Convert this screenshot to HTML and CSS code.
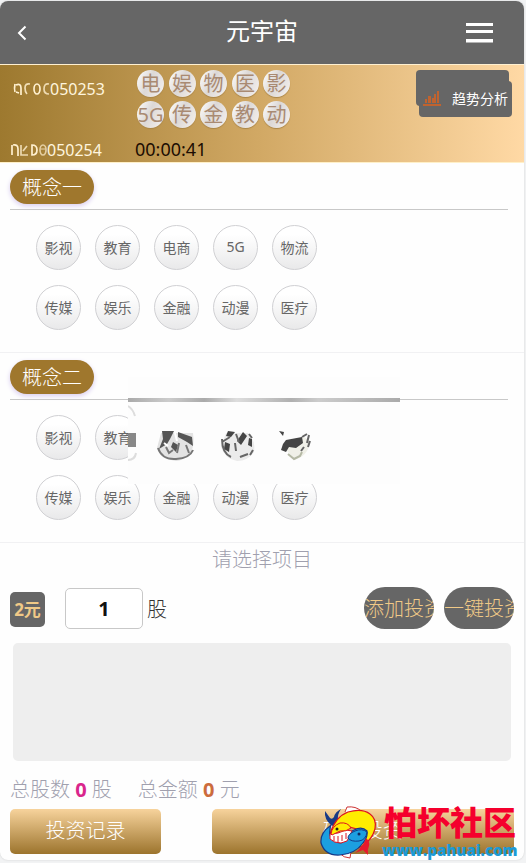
FILE: index.html
```
<!DOCTYPE html>
<html lang="zh-CN">
<head>
    <meta charset="utf-8">
    <title>元宇宙</title>
    <meta name="viewport" content="width=device-width, initial-scale=1">
    <link rel="stylesheet" href="styles.css">
</head>
<body>
<div class="page">
	<header class="topbar">
		<button type="button" class="back" aria-label="返回">
			<svg width="10" height="16" viewBox="0 0 10 16"><path d="M8.500 1.500L2 8l6.500 6.500" fill="none" stroke="#fff" stroke-width="2"/></svg>
		</button>
		<h1>元宇宙</h1>
		<button type="button" class="menu" aria-label="菜单">
			<svg width="27" height="20" viewBox="0 0 27 20"><path d="M0 0h27v3H0zM0 7h27v3H0zM0 16h27v3.500H0z" fill="#fff"/></svg>
		</button>
	</header>

	<div class="issue">
		<div class="issue-no">
			<div class="last">
				<svg width="37" height="16" viewBox="0 0 37 16" fill="none" stroke="#fff0cf" stroke-width="1.700"><path d="M2 3q-1 5 0 8M3 4q5-2 5 3v7M3 11l3 1"/><path d="M17 3q-5-1-5 4 0 4 2 6" opacity=".85"/><ellipse cx="24" cy="8" rx="3" ry="5"/><path d="M36 3q-5-1-5 5 0 5 5 5" opacity=".8"/></svg>050253
			</div>
			<div class="next">
				<svg width="37" height="16" viewBox="0 0 37 16" fill="none" stroke="#fff0cf" stroke-width="1.700"><path d="M2 3v10M3 3q5-1 5 4v7"/><path d="M11 3v10h7M17 4l-4 5" opacity=".8"/><path d="M22 3v10q5 0 5-5 0-5-5-5z"/><ellipse cx="33" cy="8" rx="3" ry="5" opacity=".7"/><path d="M31 7h4" opacity=".5"/></svg>050254
			</div>
		</div>
		<div class="draw">
			<ul class="balls">
				<li>电</li><li>娱</li><li>物</li><li>医</li><li>影</li>
				<li>5G</li><li>传</li><li>金</li><li>教</li><li>动</li>
			</ul>
			<div class="timer">00:00:41</div>
		</div>
		<button type="button" class="trend">
			<svg width="18" height="15" viewBox="0 0 18 15"><path d="M0 13h18v2H0zM2 8h2v4H2zM5 5h3v7H5zM9 7h2v5H9zM11 3h2v9h-2zM14 0h2v12h-2z" fill="#c0632f"/></svg>
			<span>趋势分析</span>
		</button>
	</div>

	<section class="concept">
		<div class="concept-head"><h2>概念一</h2></div>
		<div class="options">
			<button type="button">影视</button>
			<button type="button">教育</button>
			<button type="button">电商</button>
			<button type="button">5G</button>
			<button type="button">物流</button>
			<button type="button">传媒</button>
			<button type="button">娱乐</button>
			<button type="button">金融</button>
			<button type="button">动漫</button>
			<button type="button">医疗</button>
		</div>
	</section>

	<section class="concept">
		<div class="concept-head"><h2>概念二</h2></div>
		<div class="options">
			<button type="button">影视</button>
			<button type="button">教育</button>
			<button type="button">电商</button>
			<button type="button">5G</button>
			<button type="button">物流</button>
			<button type="button">传媒</button>
			<button type="button">娱乐</button>
			<button type="button">金融</button>
			<button type="button">动漫</button>
			<button type="button">医疗</button>
		</div>
		<!-- smeared patch lying over the second group -->
		<svg class="smudge" width="272" height="107" viewBox="0 0 272 107">
			<defs>
				<filter id="soft"><feGaussianBlur stdDeviation="0.700"/></filter>
				<linearGradient id="line">
					<stop offset="0" stop-color="#aaa"/>
					<stop offset=".15" stop-color="#ccc"/>
					<stop offset=".28" stop-color="#aaa"/>
					<stop offset=".4" stop-color="#ddd"/>
					<stop offset=".6" stop-color="#b0b0b0"/>
					<stop offset=".7" stop-color="#ccc"/>
					<stop offset="1" stop-color="#aaa"/>
				</linearGradient>
			</defs>
			<rect width="272" height="107" fill="#fdfdfd"/>
			<rect y="21" width="272" height="4" fill="url(#line)"/>
			<g filter="url(#soft)">
				<path d="M0 56h8v14H0z" fill="#888"/>
				<path d="M0 83q7 0 8-7M0 29q5 3 7 10" fill="none" stroke="#ddd" stroke-width="2"/>

				<path d="M33 56h32q2 13-3 21-7 7-14 7-16-2-19-13z" fill="#e3e3e3"/>
				<path d="M34 54h12l-4 8-3 5-8 5 4-10zM50 55l14 5 1 9-6-4-9-5zM45 65l5 3-2 7-5-5z" fill="#555"/>
				<path d="M30 71q4 12 18 11 14-1 17-9M51 66l-2 10M58 68l3 8M38 70l3 6 4-3" fill="none" stroke="#777" stroke-width="2"/>
				<path d="M47 56l2 8M36 66l4 3" fill="none" stroke="#fff" stroke-width="2"/>

				<path d="M98 56h22q8 8 6 19-6 9-17 9-12-2-16-14z" fill="#ebebeb"/>
				<path d="M100 54l7 1-4 5-5-1zM115 55l4 4-6 9-4-4zM97 65l5 2-1 8-5-3zM121 61l3 1v8l-4-2z" fill="#444"/>
				<path d="M94 62q0 14 9 18M108 57l3 8M107 66l1 8M121 57l3 4M112 80l8-3M125 73l-3 5M94 65l8-5" fill="none" stroke="#666" stroke-width="2"/>

				<path d="M154 68l22-8 6 4q-1 14-15 19z" fill="#f0f0e8"/>
				<path d="M151 54l5 1-1 4zM158 63l16-3 1 6-7 5-7-1-3 5-5-2 2-6z" fill="#444"/>
				<path d="M181 58l-2 8M182 64l-2 6M174 60l5-3M176 70l-3 4" fill="none" stroke="#666" stroke-width="2"/>
				<path d="M160 77l6 5 6-3 2-4" fill="none" stroke="#b5b9a5" stroke-width="2"/>
			</g>
		</svg>
	</section>

	<form class="order">
		<p class="tip">请选择项目</p>
		<div class="order-row">
			<span class="unit">2元</span>
			<input type="text" id="shares" value="1">
			<label for="shares">股</label>
			<button type="button" class="round">添加投资</button>
			<button type="button" class="round">一键投资</button>
		</div>
		<textarea class="list" aria-label="投资列表" readonly></textarea>
		<div class="total">
			<span>总股数 <b class="count">0</b> 股</span>
			<span>总金额 <b class="money">0</b> 元</span>
		</div>
		<div class="actions">
			<button type="button" class="record">投资记录</button>
			<button type="button" class="confirm">确认投资</button>
		</div>
	</form>

	<div class="watermark">
		<svg width="62" height="53" viewBox="0 0 62 53">
			<path d="M25 6l2-5q9-1 14 4M19 47q5 5 11 5l1-6" fill="#fff" stroke="#c33" stroke-width="1"/>
			<path d="M11 19Q4 13 5 5l5 7q2 2 4-1 1-5 7-8-4 6-3 11l-3 7z" fill="#183a86"/>
			<path d="M10 28Q15 11 28 6q14-4 22 2 7 5 5 15-3 11-13 17-5 3-7 1 8-4 8-12l-6-6-12-3z" fill="#ffed00" stroke="#dc1420" stroke-width="1.200"/>
			<path d="M10 20Q0 27 1 37q4 13 19 12 15-1 23-12 5-6 4-12-5-5-13-1-7 3-7 9l-6 4q-8 0-11-8-1-5 1-10z" fill="#1c9fe0" stroke="#153a88" stroke-width="1.200"/>
			<path d="M10 28v5q4 4 11 4l6-2 3-6 2-4-6-1-8 3z" fill="#fff" stroke="#dc1420" stroke-width="1"/>
			<path d="M11 28q1-8 9-11 8-1 11 5-5 4-11 3l-8 4z" fill="#ffed00" stroke="#dc1420" stroke-width="1"/>
			<path d="M14 30v5M18 30v6M22 29v6M26 27v6" stroke="#dc1420" stroke-width="1"/>
			<path d="M47 26q-1 8-8 9-8 1-11-3 0-4 7-7 7-3 12 1z" fill="#1c9fe0" stroke="#153a88" stroke-width="1"/>
			<circle cx="17" cy="23" r="1.500" fill="#222"/>
			<circle cx="39" cy="28" r="1.500" fill="#102a60"/>
			<path d="M46 32q4 3 3 8-2 4-1 9l-5-5-8 3q8-6 11-15z" fill="#e8192c"/>
		</svg>
		<div class="mark-text">
			<strong>怕坏社区</strong>
			<a href="#">www.pahuai.com</a>
		</div>
	</div>
</div>
</body>
</html>
```
FILE: styles.css
```
* {
	box-sizing: border-box;
	margin: 0;
	padding: 0;
}

body {
	background: #f2f3f4;
	font-family: "Noto Sans", "Noto Sans CJK SC", sans-serif;
	font-size: 20px;
	font-weight: 300;
	color: #333;
}

button, input, textarea {
	font: inherit;
	border: 0;
}

button {
	cursor: pointer;
}

svg {
	display: block;
}

.page {
	position: relative;
	margin: 1px 2px 2px 0;
	border-radius: 8px;
	background: #fefefe;
	box-shadow: 0 0 2px #ccc;
	overflow: hidden;
}

/* header */
.topbar {
	display: flex;
	align-items: center;
	justify-content: space-between;
	height: 64px;
	padding: 0 31px 0 17px;
	background: #666;
	border-bottom: 1px solid #fff0d0;
	color: #fff;
}

.topbar button {
	width: 27px;
	background: none;
}

.topbar h1 {
	padding: 0 0 4px 14px;
	font-size: 24px;
	line-height: 32px;
	font-weight: 400;
}

/* current issue */
.issue {
	display: flex;
	height: 98px;
	padding: 5px 12px 0 10px;
	background: linear-gradient(90deg, #9d792f, #d2a965 50%, #ffd9a5);
	border-bottom: 1px solid #fff0c8;
}

.issue-no {
	display: flex;
	flex-direction: column;
	justify-content: space-between;
	width: 125px;
	padding-top: 7px;
	font-size: 16px;
	line-height: 24px;
	font-weight: 400;
	color: #fff5de;
}

.last, .next {
	display: flex;
	align-items: center;
}

.last {
	padding-left: 3px;
}

.draw {
	display: flex;
	flex-direction: column;
	justify-content: space-between;
}

.balls {
	display: grid;
	grid-template-columns: repeat(5, 27px);
	justify-content: space-between;
	row-gap: 4px;
	width: 155px;
	padding-left: 2px;
	list-style: none;
}

.balls li {
	height: 27px;
	border-radius: 50%;
	background: linear-gradient(115deg, #fff, #dcd8d6 45%, #f6f2ef);
	box-shadow: 0 1px 1px #a98549;
	line-height: 27px;
	font-weight: 400;
	text-align: center;
	color: #a98a72;
}

.timer {
	font-size: 18px;
	line-height: 26px;
	font-weight: 400;
	color: #1c0d02;
}

.trend {
	position: relative;
	display: flex;
	align-items: center;
	gap: 11px;
	height: 36px;
	margin: 11px 0 0 auto;
	padding: 0 4px 2px;
	border-radius: 4px;
	background: #666;
	font-size: 14px;
	font-weight: 400;
	color: #fff;
}

.trend::before {
	content: "";
	position: absolute;
	top: -11px;
	left: -3px;
	width: 100%;
	height: 36px;
	border-radius: 4px;
	background: #666;
}

.trend svg, .trend span {
	position: relative;
}

/* concept groups */
.concept {
	position: relative;
	padding: 7px 10px 22px;
	border-bottom: 1px solid #f1f1f3;
}

.concept-head {
	margin-right: 6px;
	padding-bottom: 5px;
	border-bottom: 1px solid #c8c8c8;
}

.concept h2 {
	width: 84px;
	padding-top: 2px;
	border-radius: 17px;
	background: #9f772d;
	box-shadow: 0 2px 5px #d9cdf0;
	font-size: 20px;
	line-height: 32px;
	font-weight: 300;
	text-align: center;
	color: #fff;
}

.options {
	display: grid;
	grid-template-columns: repeat(5, 45px);
	gap: 15px 14px;
	padding: 15px 0 0 26px;
}

.options button {
	height: 45px;
	padding-bottom: 2px;
	border: 1px solid #d0d0d3;
	border-radius: 50%;
	background: linear-gradient(#fff 20%, #e9e9ea);
	font-size: 14px;
	font-weight: 400;
	color: #666;
}

.smudge {
	position: absolute;
	top: 24px;
	left: 128px;
}

/* order form */
.order {
	padding: 0 10px 6px;
}

.tip {
	line-height: 34px;
	text-align: center;
	color: #a0a0ae;
}

.order-row {
	display: flex;
	align-items: center;
	height: 42px;
	margin-top: 10px;
}

.unit {
	width: 35px;
	margin-top: 3px;
	border-radius: 5px;
	background: #666;
	font-size: 17px;
	line-height: 35px;
	font-weight: 700;
	text-align: center;
	color: #f0c987;
}

.order-row input {
	width: 78px;
	height: 41px;
	margin: 0 4px 0 20px;
	border: 1px solid #c8c8c8;
	border-radius: 5px;
	background: #fff;
	font-weight: 700;
	text-align: center;
	color: #111;
}

.order-row label {
	margin-right: auto;
}

.round {
	width: 70px;
	height: 42px;
	margin-left: 10px;
	padding-bottom: 2px;
	border-radius: 21px;
	background: #666;
	text-align: left;
	white-space: nowrap;
	overflow: hidden;
	color: #f0c987;
}

.list {
	display: block;
	width: calc(100% - 6px);
	height: 118px;
	margin: 14px 3px 12px;
	border-radius: 5px;
	background: #eee;
	resize: none;
}

.total {
	display: flex;
	gap: 26px;
	line-height: 34px;
	color: #a0a0ae;
}

.total b {
	font-weight: 700;
}

.total .count {
	color: #d9268c;
}

.total .money {
	color: #cc6c3d;
}

.actions {
	display: flex;
	justify-content: space-between;
	margin-top: 2px;
}

.actions button {
	height: 45px;
	padding-bottom: 4px;
	border-radius: 5px;
	background: linear-gradient(#f7d39c, #9c742d);
	color: #fff;
}

.actions .record {
	width: 30%;
}

.actions .confirm {
	width: 60%;
}

/* site mark in the corner */
.watermark {
	position: absolute;
	right: 7px;
	bottom: 1px;
	display: flex;
	align-items: center;
}

.mark-text {
	display: flex;
	flex-direction: column;
	width: 135px;
}

.mark-text strong {
	padding-left: 2px;
	font-size: 33px;
	line-height: 36px;
	font-weight: 900;
	white-space: nowrap;
	color: #f5002d;
}

.mark-text a {
	font-family: "Open Sans", sans-serif;
	font-size: 15px;
	line-height: 18px;
	font-weight: 800;
	text-decoration: none;
	color: #1b9ad6;
}
```
